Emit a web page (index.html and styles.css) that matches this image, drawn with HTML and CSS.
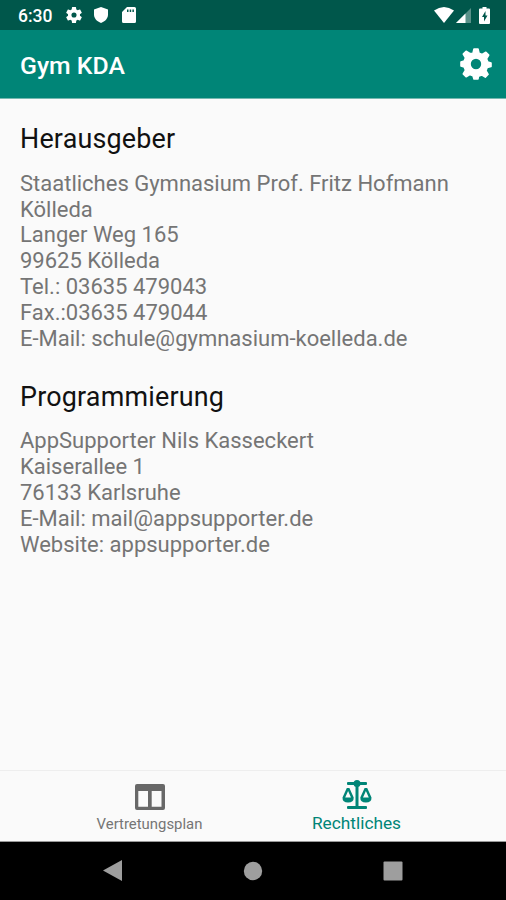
FILE: index.html
```html
<!DOCTYPE html>
<html lang="de">
<head>
<meta charset="utf-8">
<title>Gym KDA</title>
<link rel="stylesheet" href="styles.css">
</head>
<body>
<div class="screen">
  <header class="status">
    <span class="time">6:30</span>
    <svg class="st-gear" viewBox="2 2 20 20"><path fill-rule="evenodd" d="M19.43 12.98a7.8 7.8 0 0 0 0-1.96l2.11-1.65a.5.5 0 0 0 .12-.64l-2-3.46a.5.5 0 0 0-.61-.22l-2.49 1a7.3 7.3 0 0 0-1.69-.98l-.38-2.65A.5.5 0 0 0 14 2h-4a.5.5 0 0 0-.49.42l-.38 2.65c-.61.25-1.17.59-1.69.98l-2.49-1a.5.5 0 0 0-.61.22l-2 3.46a.5.5 0 0 0 .12.64l2.11 1.65a7.9 7.9 0 0 0 0 1.96l-2.11 1.65a.5.5 0 0 0-.12.64l2 3.46c.12.22.39.3.61.22l2.49-1c.52.4 1.08.73 1.69.98l.38 2.65c.03.24.24.42.49.42h4c.25 0 .46-.18.49-.42l.38-2.65a7.3 7.3 0 0 0 1.69-.98l2.49 1c.23.09.49 0 .61-.22l2-3.46a.5.5 0 0 0-.12-.64zM12 15.2a3.2 3.2 0 1 1 0-6.4 3.2 3.2 0 0 1 0 6.4z"/></svg>
    <svg class="st-shield" viewBox="0 0 14 16"><path d="M7 0l7 2.6v5C14 11.400 11 14.800 7 16 3 14.800 0 11.400 0 7.600v-5z"/></svg>
    <svg class="st-card" viewBox="0 0 14 16"><path fill-rule="evenodd" d="M5 0h7.500Q14 0 14 1.500v13q0 1.500-1.500 1.500h-11Q0 16 0 14.500V5zM5 2.500V5h1.500V2.500zm2.700 0V5h1.500V2.500zm2.700 0V5h1.500V2.500z"/></svg>
    <span class="grow"></span>
    <svg class="st-wifi" viewBox="0 0 20 16"><path d="M0 3.500Q10-3.500 20 3.500L10 16z"/></svg>
    <svg class="st-cell" viewBox="0 0 15 15"><path opacity=".35" d="M15 0v15H0z"/><path d="M9.500 5.500V15H0z"/></svg>
    <svg class="st-batt" viewBox="0 0 11 17"><path fill-rule="evenodd" d="M3.500 0h4v1.500H10q1 0 1 1V16q0 1-1 1H1q-1 0-1-1V2.500q0-1 1-1h2.500zM6.500 4L3 10h2v4.500L8.500 8.500h-2z"/></svg>
  </header>
  <div class="appbar">
    <h1>Gym KDA</h1>
    <svg class="gear" viewBox="-16 -16 32 32"><path fill-rule="evenodd" stroke="#fff" stroke-width="1.600" stroke-linejoin="round" d="M-2-15h4l1 4.200 3.200 1.300 3.700-2.200 2.800 2.800-2.200 3.700 1.300 3.200 3.200 1v3.400l-3.800 1-1.300 3.200 2.200 3.700-2.800 2.800-3.700-2.200-3.200 1.300L2 15h-4l-1-3.200-3.200-1.300-3.700 2.200-2.800-2.800 2.200-3.700-1.300-3.200-3.200-1v-4l3.200-1 1.300-3.200-2.200-3.700 2.800-2.800 3.700 2.200L-3-10.800zM0-6A6 6 0 1 0 0 6 6 6 0 1 0 0-6z"/></svg>
  </div>
  <main>
    <h2>Herausgeber</h2>
    <p>Staatliches Gymnasium Prof. Fritz Hofmann<br>Kölleda<br>Langer Weg 165<br>99625 Kölleda<br>Tel.: 03635 479043<br>Fax.:03635 479044<br>E-Mail: schule@gymnasium-koelleda.de</p>
    <h2>Programmierung</h2>
    <p>AppSupporter Nils Kasseckert<br>Kaiserallee 1<br>76133 Karlsruhe<br>E-Mail: mail@appsupporter.de<br>Website: appsupporter.de</p>
  </main>
  <nav class="tabs">
    <div class="tab">
      <svg class="ic-plan" viewBox="0 0 30 26"><path fill-rule="evenodd" d="M2 0h26q2 0 2 2v22q0 2-2 2H2q-2 0-2-2V2Q0 0 2 0zM3.300 7v15.700h9.700V7zm13.400 0v15.700h9.800V7z"/></svg>
      <span>Vertretungsplan</span>
    </div>
    <div class="tab active">
      <svg class="ic-law" viewBox="0 0 30 30"><circle cx="15" cy="3.500" r="3.500"/><rect x="5" y="2" width="20" height="3" rx="1"/><rect x="13.500" y="4" width="3" height="23"/><rect x="5" y="26" width="20" height="3" rx="1"/><path fill-rule="evenodd" d="M4.800 8h2.600l4.300 9.500q.2 5-5.600 5t-5.600-5zM6.100 11L3.200 17.500h5.800zM22.600 8h2.600l4.300 9.500q.2 5-5.600 5t-5.600-5zM23.900 11L21 17.500h5.800z"/></svg>
      <span>Rechtliches</span>
    </div>
  </nav>
  <div class="sysnav">
    <svg viewBox="0 0 20 22"><path d="M19 0v21L0 10.500z"/></svg>
    <svg viewBox="0 0 20 22"><circle cx="10" cy="11" r="9.200"/></svg>
    <svg viewBox="0 0 20 22"><rect x=".5" y="1.500" width="19" height="19" rx="1"/></svg>
  </div>
</div>
</body>
</html>
```
FILE: styles.css
```css
* { box-sizing: border-box; margin: 0; padding: 0; }
body { background: #fafafa; font-family: Roboto, sans-serif; }
svg { display: block; flex: none; fill: #fff; }
.screen { width: 506px; height: 900px; display: flex; flex-direction: column; overflow: hidden; }
.status { height: 30px; background: #00574b; display: flex; align-items: center; padding: 0 16px 0 18px; color: #fff; }
.time { width: 48px; font-size: 17.500px; font-weight: 500; padding-top: 2px; }
.grow { flex: 1; }
.st-gear { width: 16px; height: 16px; margin-right: 12px; }
.st-shield { width: 14px; height: 16px; margin-right: 14px; }
.st-card { width: 14px; height: 16px; }
.st-wifi { width: 20px; height: 16px; margin-right: 2px; }
.st-cell { width: 15px; height: 15px; margin-right: 8px; }
.st-batt { width: 11px; height: 17px; }
.appbar { height: 69px; background: #008577; border-bottom: 1px solid #75b8b0; display: flex; align-items: center; justify-content: space-between; padding: 0 14px 0 20px; color: #fff; }
h1 { font-size: 24.800px; font-weight: 500; line-height: 30px; padding-top: 3px; }
.gear { width: 32px; height: 32px; }
main { flex: 1; padding: 24px 20px 0; }
h2 { font-size: 26.900px; font-weight: 400; line-height: 32px; color: #111; letter-spacing: .2px; white-space: nowrap; }
p { font-size: 22px; line-height: 25.800px; color: #757575; margin: 15.800px 0 29.200px; white-space: nowrap; }
.tabs { height: 72px; border-top: 1px solid #eee; border-bottom: 1px solid #999; display: flex; justify-content: center; }
.tab { width: 207px; height: 70px; display: flex; flex-direction: column; align-items: center; color: #757575; font-size: 14.900px; }
.tab span { line-height: 18px; white-space: nowrap; }
.ic-plan { width: 30px; height: 26px; margin: 13px 0 5px; fill: #686868; }
.active { color: #008577; font-size: 17.300px; }
.ic-law { width: 30px; height: 30px; margin: 9px 0 4px; fill: #008577; }
.sysnav { height: 58px; background: #000; display: flex; justify-content: center; align-items: center; gap: 120px; }
.sysnav svg { width: 20px; height: 22px; fill: #9e9e9e; }
```
